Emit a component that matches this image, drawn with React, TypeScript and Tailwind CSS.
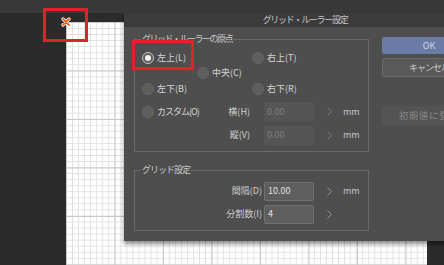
import React from "react";

type RadioProps = {
  label: string;
  checked?: boolean;
  tight?: boolean;
};

const Radio = ({ label, checked, tight }: RadioProps) => (
  <div className="flex items-center gap-[3px]">
    {checked ? (
      <span className="w-[12px] h-[12px] rounded-full border-[1.5px] border-[#c4c4c4] bg-[#5c5c5c] flex items-center justify-center shrink-0">
        <span className="w-[6px] h-[6px] rounded-full bg-[#f2f2f2]" />
      </span>
    ) : (
      <span className="w-[12px] h-[12px] rounded-full border border-[#656565] bg-[#5e5e5e] shrink-0" />
    )}
    <span
      className={`text-[9px] leading-[12px] text-[#d4d4d4] whitespace-nowrap ${
        tight ? "tracking-[-1px]" : ""
      }`}
    >
      {label}
    </span>
  </div>
);

const Chevron = ({ dim }: { dim?: boolean }) => (
  <svg width="5" height="9" viewBox="0 0 5 9" className="shrink-0">
    <path
      d="M0.5 0.5 L4.5 4.5 L0.5 8.5"
      fill="none"
      stroke={dim ? "#7c7c7c" : "#949494"}
      strokeWidth="1"
    />
  </svg>
);

type FieldProps = {
  label: string;
  value: string;
  unit?: string;
  disabled?: boolean;
  labelGap: string;
};

const Field = ({ label, value, unit, disabled, labelGap }: FieldProps) => (
  <div className="flex items-center">
    <span className={`text-[9px] leading-[12px] text-[#cfcfcf] whitespace-nowrap ${labelGap}`}>
      {label}
    </span>
    <div
      className={`w-[50px] h-[19px] flex items-center pl-[3px] text-[9px] rounded-[2px] ${
        disabled
          ? "bg-[#555555] text-[#7e7e7e]"
          : "bg-[#5e5e5e] border border-[#707070] text-[#e2e2e2]"
      }`}
    >
      {value}
    </div>
    <div className="ml-[13px] w-[5px]">
      <Chevron dim={disabled} />
    </div>
    <span className="ml-[11px] w-[25px] text-[9px] text-[#c8c8c8]">{unit}</span>
  </div>
);

const App = () => {
  return (
    <div className="relative w-[444px] h-[265px] overflow-hidden bg-[#2b2b2b] flex flex-col font-['Noto_Sans_CJK_JP','Liberation_Sans',sans-serif]">
      <div className="h-[13px] bg-[#393939] shrink-0" />
      <div className="flex flex-1">
        <div className="w-[66px] bg-[#2b2b2b]" />
        <div className="w-[361px] flex flex-col">
          <div className="h-[9px] bg-[#2b2b2b]" />
          <div className="flex-1 bg-white bg-[linear-gradient(to_right,#c8c8c8_1px,transparent_1px),linear-gradient(to_bottom,#c8c8c8_1px,transparent_1px),linear-gradient(to_right,#e0e0e0_1px,transparent_1px),linear-gradient(to_bottom,#e0e0e0_1px,transparent_1px)] bg-[size:48.5px_48.5px,48.5px_48.5px,6.06px_6.06px,6.06px_6.06px] bg-[position:0_0]" />
        </div>
        <div className="flex-1 bg-[#2b2b2b]" />
      </div>

      {/* orange origin mark */}
      <svg width="10" height="10" viewBox="0 0 10 10" className="absolute left-[61px] top-[17px]">
        <path d="M2 2 L8 8 M8 2 L2 8" stroke="#ffffff" strokeWidth="3.2" strokeLinecap="round" />
        <path d="M2 2 L8 8 M8 2 L2 8" stroke="#f0641e" strokeWidth="1.8" strokeLinecap="round" />
      </svg>

      {/* dialog window */}
      <div className="absolute left-[124px] top-[13px] w-[362px] h-[228px] bg-[#4e4e4e] shadow-[0_3px_4px_rgba(0,0,0,0.45)] flex flex-col">
        <div className="h-[14px] bg-[#3b3b3b] flex items-center justify-center text-[9px] leading-[12px] tracking-[-1.3px] text-[#c4c4c4] whitespace-nowrap">
          グリッド・ルーラー設定
        </div>
        <div className="flex px-[10px] pt-[9px] gap-[13px]">
          <div className="w-[235px] flex flex-col">
            <div className="relative mt-[3px] h-[113px] border border-[#686868] pl-[7px] pt-[10px]">
              <span className="absolute left-[6px] -top-[7px] px-[1px] bg-[#4e4e4e] text-[9px] leading-[12px] tracking-[-1.5px] text-[#c8c8c8] whitespace-nowrap">
                グリッド・ルーラーの原点
              </span>
              <div className="h-[15px] grid grid-cols-[55px_55px_1fr] items-center">
                <Radio label="左上(L)" checked />
                <div />
                <Radio label="右上(T)" />
              </div>
              <div className="h-[15px] grid grid-cols-[55px_55px_1fr] items-center">
                <div />
                <Radio label="中央(C)" />
                <div />
              </div>
              <div className="mt-[1px] h-[15px] grid grid-cols-[55px_55px_1fr] items-center">
                <Radio label="左下(B)" />
                <div />
                <Radio label="右下(R)" />
              </div>
              <div className="mt-[5px] h-[21px] flex items-center">
                <div className="flex-1">
                  <Radio label="カスタム(O)" tight />
                </div>
                <Field label="横(H)" value="0.00" unit="mm" disabled labelGap="mr-[14px]" />
              </div>
              <div className="mt-[3px] h-[20px] flex items-center justify-end">
                <Field label="縦(V)" value="0.00" unit="mm" disabled labelGap="mr-[14px]" />
              </div>
            </div>

            <div className="relative mt-[18px] h-[61px] border border-[#686868] pt-[10px] flex flex-col items-end">
              <span className="absolute left-[6px] -top-[7px] px-[1px] bg-[#4e4e4e] text-[9px] leading-[12px] tracking-[-1px] text-[#c8c8c8] whitespace-nowrap">
                グリッド設定
              </span>
              <div className="h-[20px] flex items-center">
                <Field label="間隔(D)" value="10.00" unit="mm" labelGap="mr-[2px]" />
              </div>
              <div className="mt-[3px] h-[20px] flex items-center">
                <Field label="分割数(I)" value="4" labelGap="mr-[2px]" />
              </div>
            </div>
          </div>

          <div className="w-[94px] flex flex-col">
            <button className="mt-[1px] h-[17px] rounded-[2px] bg-[#6a7ba6] text-[9px] text-[#cfd6e6]">
              OK
            </button>
            <button className="mt-[4px] h-[19px] rounded-[2px] bg-[#595959] border border-[#6a6a6a] text-[9px] tracking-[-1px] text-[#c8c8c8]">
              キャンセル
            </button>
            <button className="mt-[29px] h-[19px] rounded-[2px] bg-[#545454] text-[9px] tracking-[1px] text-[#8a8a8a]">
              初期値に登録
            </button>
          </div>
        </div>
      </div>

      {/* annotation frames */}
      <div className="absolute left-[43px] top-[8px] w-[45px] h-[34px] border-[3px] border-[#e3212b]" />
      <div className="absolute left-[132px] top-[40px] w-[62px] h-[30px] border-[3px] border-[#e3212b]" />
    </div>
  );
};

export default App;
